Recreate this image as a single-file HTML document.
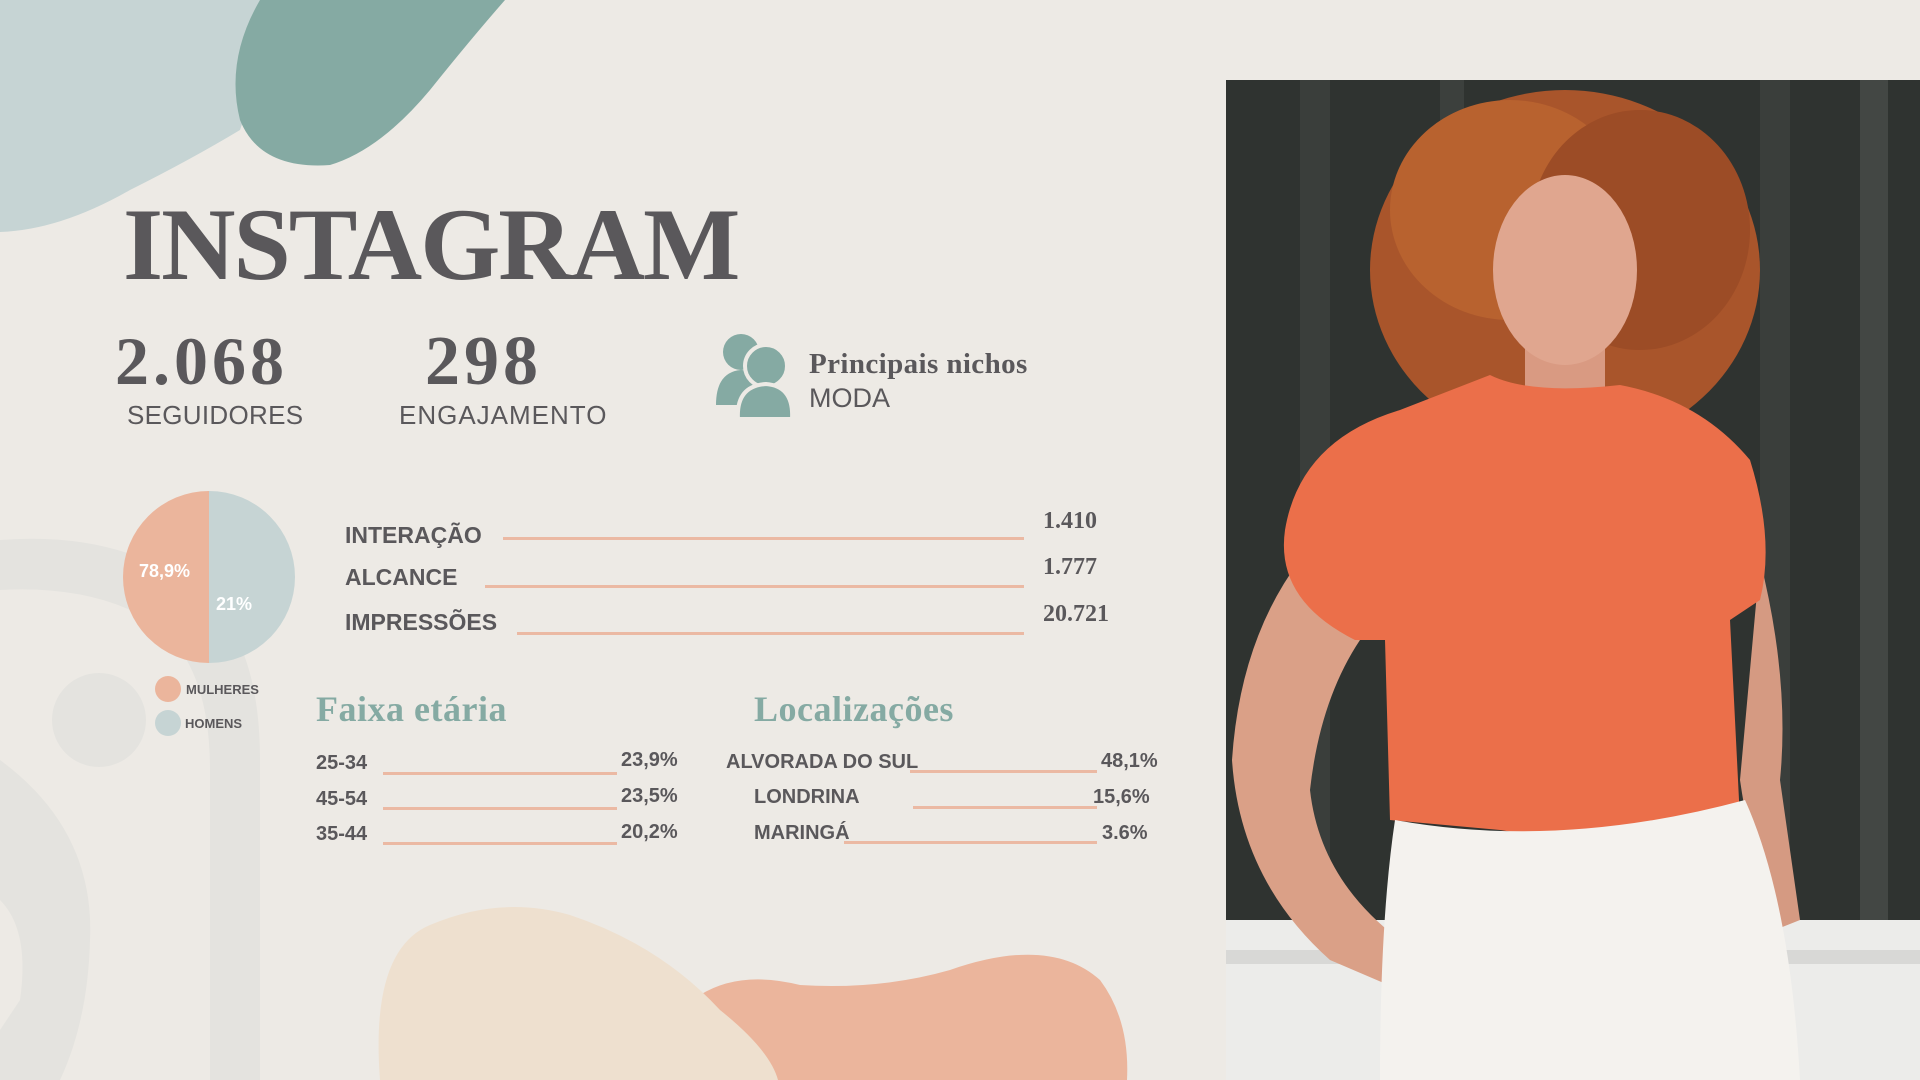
<!DOCTYPE html>
<html><head><meta charset="utf-8">
<style>
*{margin:0;padding:0;box-sizing:border-box}
body{width:1920px;height:1080px;overflow:hidden;background:#edeae5;position:relative;font-family:"Liberation Sans",sans-serif;color:#5a585b}
.a{position:absolute;white-space:nowrap}
.serif{font-family:"Liberation Serif",serif;font-weight:bold}
.lab{font-weight:bold;font-size:23px;color:#5a585b}
.val{font-family:"Liberation Serif",serif;font-weight:bold;font-size:24px;color:#5a585b}
.ln{position:absolute;height:3px;background:#ebb9a3}
.sm{font-weight:bold;font-size:20px;color:#5a585b}
</style></head><body>
<svg class="a" style="left:0;top:0" width="1920" height="1080" viewBox="0 0 1920 1080">
  <path d="M0 540 Q130 530 210 600 Q260 650 260 760 L260 1080 L210 1080 L210 770 Q210 660 150 620 Q90 585 0 590 Z" fill="#e4e3df"/>
  <path d="M0 760 Q95 830 90 940 Q88 1020 60 1080 L0 1080 Z" fill="#e4e3df"/>
  <path d="M0 900 Q30 930 20 1000 L0 1030 Z" fill="#edeae5"/>
  <circle cx="99" cy="720" r="47" fill="#e4e3df"/>
  <path d="M0 0 L290 0 Q260 70 240 130 Q190 160 130 190 Q60 230 0 232 Z" fill="#c6d4d4"/>
  <path d="M260 0 L505 0 Q470 40 430 90 Q380 150 330 165 Q260 170 240 120 Q225 60 260 0 Z" fill="#85aaa3"/>
  <path d="M700 995 Q740 970 800 985 Q880 990 950 970 Q1050 935 1100 980 Q1130 1020 1127 1080 L700 1080 Z" fill="#ebb59c"/>
  <path d="M380 1080 Q370 950 430 925 Q500 895 570 915 Q660 945 720 1010 Q770 1050 778 1080 Z" fill="#eee0cf"/>
  <path d="M209 491 A86 86 0 0 0 209 663 Z" fill="#ebb59c"/>
  <path d="M209 491 A86 86 0 0 1 209 663 Z" fill="#c6d4d4"/>
  <circle cx="168" cy="689" r="13" fill="#ebb59c"/>
  <circle cx="168" cy="723" r="13" fill="#c6d4d4"/>
  <circle cx="741" cy="352" r="18" fill="#85aaa3"/>
  <path d="M716 405 Q716 372 741 370 Q760 370 764 385 L764 405 Z" fill="#85aaa3"/>
  <circle cx="766" cy="366" r="21" fill="#85aaa3" stroke="#edeae5" stroke-width="4"/>
  <path d="M738 419 Q736 386 766 384 Q794 386 792 419 Z" fill="#85aaa3" stroke="#edeae5" stroke-width="4"/>
  <!-- photo -->
  <rect x="1226" y="80" width="694" height="1000" fill="#2f3330"/>
  <rect x="1300" y="80" width="30" height="900" fill="#3a3e3b"/>
  <rect x="1440" y="80" width="24" height="600" fill="#3c403d"/>
  <rect x="1760" y="80" width="30" height="900" fill="#3a3e3b"/>
  <rect x="1860" y="80" width="28" height="900" fill="#434744"/>
  <rect x="1226" y="920" width="694" height="160" fill="#ececea"/>
  <rect x="1226" y="950" width="694" height="14" fill="#d8d8d6"/>
  <ellipse cx="1565" cy="270" rx="195" ry="180" fill="#a9552b"/>
  <ellipse cx="1510" cy="210" rx="120" ry="110" fill="#b8622f"/>
  <ellipse cx="1640" cy="230" rx="110" ry="120" fill="#9c4c26"/>
  <rect x="1525" y="330" width="80" height="80" fill="#d99a82"/>
  <ellipse cx="1565" cy="270" rx="72" ry="95" fill="#e0a68f"/>
  <path d="M1300 560 Q1240 640 1232 760 Q1240 880 1330 960 L1400 990 L1400 940 Q1320 880 1310 790 Q1320 700 1360 640 Z" fill="#daa087"/>
  <path d="M1760 560 Q1790 680 1780 780 Q1790 850 1800 920 L1775 930 Q1750 850 1740 780 Z" fill="#d59a82"/>
  <path d="M1490 375 Q1530 395 1620 385 Q1700 400 1750 460 Q1775 540 1760 600 L1730 620 L1740 820 Q1620 850 1500 830 L1390 820 L1385 640 L1355 640 Q1275 600 1285 530 Q1300 440 1400 410 Z" fill="#eb6f4a"/>
  <path d="M1395 820 Q1560 850 1745 800 Q1790 900 1800 1080 L1380 1080 Q1380 920 1395 820 Z" fill="#f4f2ee"/>
</svg>

<div class="a serif" style="left:123px;top:194px;font-size:103px;letter-spacing:-2px;color:#5a585b;line-height:1">INSTAGRAM</div>

<div class="a serif" style="left:115px;top:327px;font-size:68px;letter-spacing:4px;line-height:1">2.068</div>
<div class="a" style="left:127px;top:400px;font-size:26px;letter-spacing:0.3px;color:#5a585b">SEGUIDORES</div>
<div class="a serif" style="left:425px;top:327px;font-size:70px;letter-spacing:4px;line-height:1">298</div>
<div class="a" style="left:399px;top:400px;font-size:26px;letter-spacing:1px;color:#5a585b">ENGAJAMENTO</div>

<div class="a serif" style="left:809px;top:348px;font-size:29px;letter-spacing:0.4px">Principais nichos</div>
<div class="a" style="left:809px;top:383px;font-size:27px">MODA</div>

<div class="a" style="left:139px;top:561px;font-size:18px;font-weight:bold;color:#fff">78,9%</div>
<div class="a" style="left:216px;top:594px;font-size:18px;font-weight:bold;color:#fff">21%</div>
<div class="a" style="left:186px;top:682px;font-size:13px;font-weight:bold">MULHERES</div>
<div class="a" style="left:185px;top:716px;font-size:13px;font-weight:bold">HOMENS</div>

<div class="a lab" style="left:345px;top:522px">INTERAÇÃO</div>
<div class="ln" style="left:503px;top:537px;width:521px"></div>
<div class="a val" style="left:1043px;top:508px">1.410</div>
<div class="a lab" style="left:345px;top:564px">ALCANCE</div>
<div class="ln" style="left:485px;top:585px;width:539px"></div>
<div class="a val" style="left:1043px;top:554px">1.777</div>
<div class="a lab" style="left:345px;top:609px">IMPRESSÕES</div>
<div class="ln" style="left:517px;top:632px;width:507px"></div>
<div class="a val" style="left:1043px;top:601px">20.721</div>

<div class="a serif" style="left:316px;top:688px;font-size:36px;letter-spacing:0.5px;color:#85aaa3">Faixa etária</div>
<div class="a serif" style="left:754px;top:688px;font-size:36px;letter-spacing:0.5px;color:#85aaa3">Localizações</div>

<div class="a sm" style="left:316px;top:752px">25-34</div>
<div class="ln" style="left:383px;top:772px;width:234px"></div>
<div class="a sm" style="left:621px;top:749px">23,9%</div>
<div class="a sm" style="left:316px;top:788px">45-54</div>
<div class="ln" style="left:383px;top:807px;width:234px"></div>
<div class="a sm" style="left:621px;top:785px">23,5%</div>
<div class="a sm" style="left:316px;top:823px">35-44</div>
<div class="ln" style="left:383px;top:842px;width:234px"></div>
<div class="a sm" style="left:621px;top:821px">20,2%</div>

<div class="a sm" style="left:726px;top:751px">ALVORADA DO SUL</div>
<div class="ln" style="left:910px;top:770px;width:187px"></div>
<div class="a sm" style="left:1101px;top:750px">48,1%</div>
<div class="a sm" style="left:754px;top:786px">LONDRINA</div>
<div class="ln" style="left:913px;top:806px;width:184px"></div>
<div class="a sm" style="left:1093px;top:786px">15,6%</div>
<div class="a sm" style="left:754px;top:822px">MARINGÁ</div>
<div class="ln" style="left:844px;top:841px;width:253px"></div>
<div class="a sm" style="left:1102px;top:822px">3.6%</div>
</body></html>
